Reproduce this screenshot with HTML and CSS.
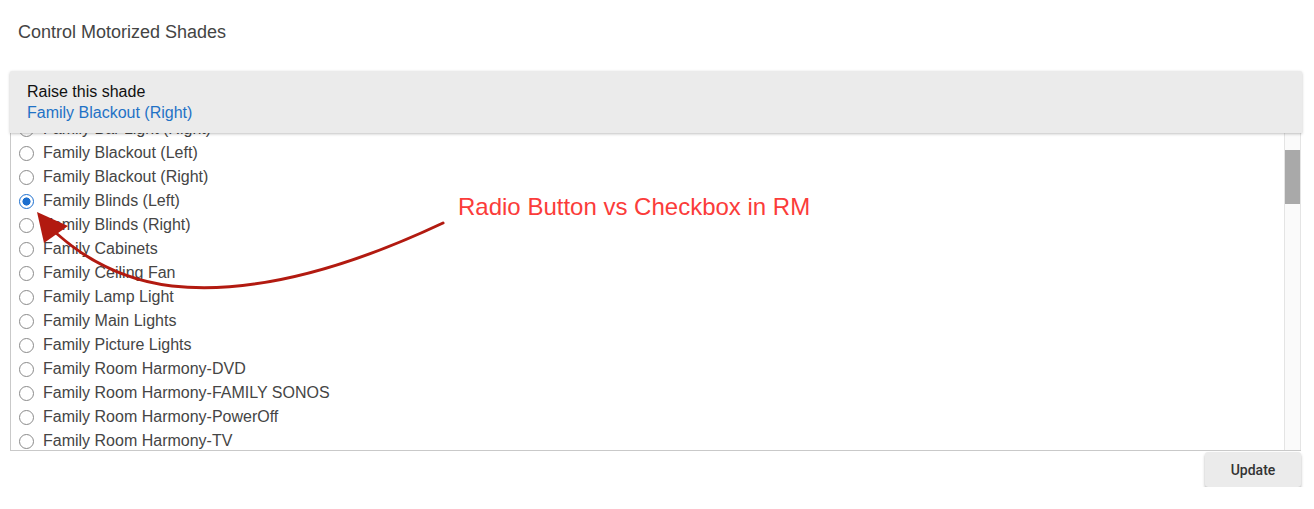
FILE: index.html
```html
<!DOCTYPE html>
<html lang="en">
<head>
  <meta charset="UTF-8">
  <title>Control Motorized Shades</title>
  <link rel="stylesheet" href="styles.css">
</head>
<body>
  <div class="page">
    <h1 class="title">Control Motorized Shades</h1>

    <div class="select">
      <div class="select-head">
        <div class="label">Raise this shade</div>
        <div class="value">Family Blackout (Right)</div>
      </div>
      <div class="select-body">
        <ul class="options">
          <li><span class="radio"></span>Family Bar Light (Right)</li>
          <li><span class="radio"></span>Family Blackout (Left)</li>
          <li><span class="radio"></span>Family Blackout (Right)</li>
          <li><span class="radio checked"></span>Family Blinds (Left)</li>
          <li><span class="radio"></span>Family Blinds (Right)</li>
          <li><span class="radio"></span>Family Cabinets</li>
          <li><span class="radio"></span>Family Ceiling Fan</li>
          <li><span class="radio"></span>Family Lamp Light</li>
          <li><span class="radio"></span>Family Main Lights</li>
          <li><span class="radio"></span>Family Picture Lights</li>
          <li><span class="radio"></span>Family Room Harmony-DVD</li>
          <li><span class="radio"></span>Family Room Harmony-FAMILY SONOS</li>
          <li><span class="radio"></span>Family Room Harmony-PowerOff</li>
          <li><span class="radio"></span>Family Room Harmony-TV</li>
          <li><span class="radio"></span>Family Room Lamp</li>
        </ul>
        <div class="scrollbar"><div class="thumb"></div></div>
      </div>
    </div>

    <div class="actions">
      <button class="btn">Update</button>
    </div>
  </div>

  <!-- annotation drawn over the screenshot -->
  <div class="note">Radio Button vs Checkbox in RM</div>
  <svg class="arrow" width="1314" height="509" viewBox="0 0 1314 509">
    <path d="M443,223 C360,262 262,296 172,286 C122,280 84,258 56,233" fill="none" stroke="#b21a10" stroke-width="3" stroke-linecap="round"/>
    <polygon points="37,212 44,243 68,226" fill="#b21a10"/>
  </svg>
</body>
</html>
```

FILE: styles.css
```css
body {
  margin: 0;
  font-family: "Liberation Sans", Arial, sans-serif;
  background: #fff;
  color: #444;
}

.page {
  padding: 20px 13px 0 10px;
}

.title {
  margin: 0 0 27px 8px;
  font-size: 18px;
  font-weight: normal;
  line-height: 24px;
  color: #444;
}

.select-head {
  position: relative;
  z-index: 1;
  height: 42px;
  padding: 10px 17px;
  margin-right: -1px;
  background: #ebebeb;
  border-radius: 2px 2px 0 0;
  box-shadow: 0 1px 3px rgba(0, 0, 0, 0.25);
  font-size: 16px;
  line-height: 21px;
}

.label { color: #111; }
.value { color: #1f72c6; }

.select-body {
  display: flex;
  height: 317px;
  border-left: 1px solid #c9c9c9;
  border-bottom: 1px solid #c9c9c9;
  overflow: hidden;
}

.options {
  flex: 1;
  list-style: none;
  margin: -16px 0 0 0;
  padding: 0;
}

.options li {
  display: flex;
  align-items: center;
  height: 24px;
  font-size: 16px;
  color: #454545;
}

.radio {
  box-sizing: border-box;
  width: 15px;
  height: 15px;
  margin: 0 9px 0 8px;
  border: 1.3px solid #8a8a8a;
  border-radius: 50%;
  background: #fff;
}

.radio.checked {
  border: 1.6px solid #1c6fcf;
  background: radial-gradient(circle, #1c6fcf 0 3.8px, #fff 4.3px);
}

.scrollbar {
  width: 15px;
  border-left: 1px solid #e4e4e4;
  border-right: 1px solid #e4e4e4;
  background: #fafafa;
  padding-top: 17px;
}

.thumb {
  height: 54px;
  background: #a9a9a9;
}

.actions {
  display: flex;
  justify-content: flex-end;
  margin-top: 1px;
}

.btn {
  width: 96px;
  height: 35px;
  border: none;
  border-radius: 3px;
  background: #ebebeb;
  box-shadow: 0 2px 3px rgba(0, 0, 0, 0.3);
  font-family: Roboto, "Liberation Sans", sans-serif;
  font-size: 14px;
  font-weight: 500;
  color: #333;
  cursor: pointer;
}

.note {
  position: absolute;
  left: 458px;
  top: 193px;
  font-size: 24px;
  line-height: 28px;
  color: #fb3c3a;
}

.arrow {
  position: absolute;
  left: 0;
  top: 0;
  pointer-events: none;
}
```
